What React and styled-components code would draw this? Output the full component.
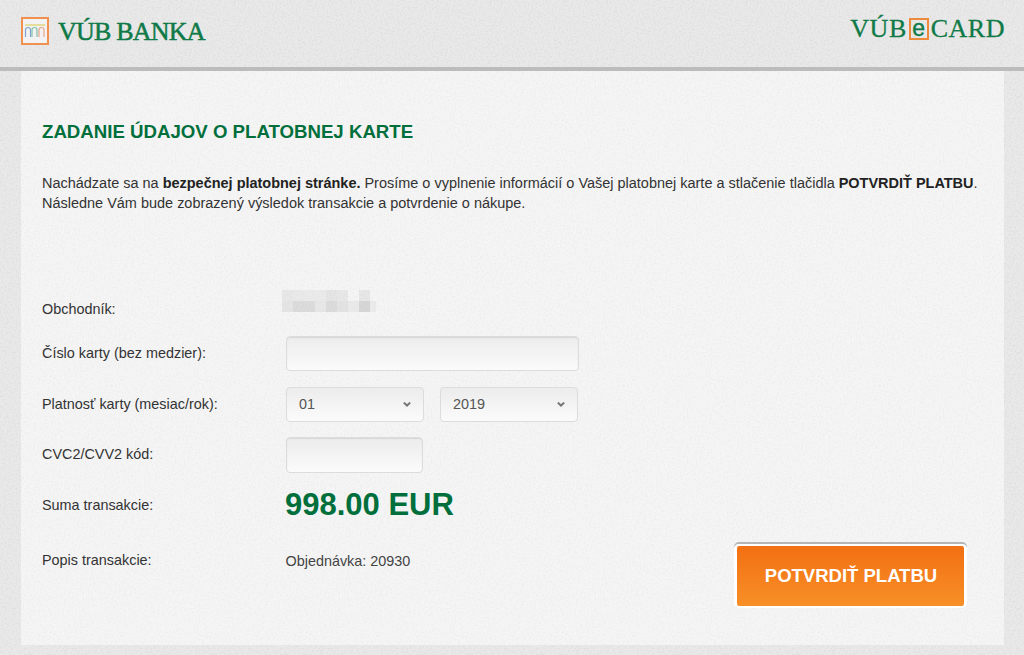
import React from "react";
import styled, { createGlobalStyle } from "styled-components";

const noise = (alpha) =>
  `url("data:image/svg+xml;utf8,<svg xmlns='http://www.w3.org/2000/svg' width='256' height='256'><filter id='n' x='0' y='0' width='100%' height='100%'><feTurbulence type='fractalNoise' baseFrequency='0.55' numOctaves='2' seed='4' stitchTiles='stitch'/><feColorMatrix values='0 0 0 0 0.45 0 0 0 0 0.45 0 0 0 0 0.45 0 0 0 ${alpha} ${-alpha * 0.42}'/></filter><rect width='256' height='256' filter='url(%23n)'/></svg>")`;

const Global = createGlobalStyle`
  html, body { margin: 0; padding: 0; background: #e9e9e9; }
  body { font-family: "Liberation Sans", Arial, sans-serif; color: #333; overflow: hidden; }
`;

const Page = styled.div`
  width: 1024px;
  height: 655px;
  background: #e9e9e9 ${noise(0.5)};
  overflow: hidden;
`;

const Header = styled.header`
  height: 67px;
  border-bottom: 4px solid #bcbcbc;
  display: flex;
  justify-content: space-between;
  padding: 0 19px 0 21px;
`;

const Brand = styled.div`
  display: flex;
  align-items: center;
  height: 62px;
  gap: 9px;
  color: #0f7a47;
  font-family: "Liberation Serif", serif;
  font-size: 26px;
  letter-spacing: -0.8px;
  -webkit-text-stroke: 0.5px #0f7a47;
  white-space: nowrap;
`;

const BrandName = styled.span`
  padding-top: 2px;
`;

const CardBrand = styled.div`
  display: flex;
  align-items: center;
  height: 58px;
  gap: 2px;
  color: #0f7a47;
  font-family: "Liberation Serif", serif;
  font-size: 26px;
  letter-spacing: 0.5px;
  -webkit-text-stroke: 0.3px #0f7a47;
`;

const EBox = styled.span`
  width: 20px;
  height: 22px;
  box-sizing: border-box;
  border: 2px solid #ee8a3c;
  display: flex;
  align-items: center;
  justify-content: center;
  font-family: "Liberation Sans", sans-serif;
  font-size: 23px;
  line-height: 18px;
  letter-spacing: 0;
  padding-bottom: 3px;
  -webkit-text-stroke: 0.4px #0f7a47;
`;

const Panel = styled.main`
  margin: 0 20px 0 21px;
  height: 574px;
  box-sizing: border-box;
  background: #f5f5f5 ${noise(0.3)};
  padding: 50px 20px 0 21px;
  position: relative;
`;

const Title = styled.h1`
  margin: 0;
  color: #006f3c;
  font-size: 18.65px;
  line-height: 22px;
  font-weight: 700;
`;

const Intro = styled.p`
  margin: 30px 0 0;
  font-size: 14.47px;
  line-height: 20px;
  color: #333;
  b { color: #222; }
`;

const Form = styled.div`
  margin-top: 79px;
  display: grid;
  grid-template-columns: 244px 1fr;
  grid-template-rows: 36px 51px 51px 50px 52px 58px;
  align-items: center;
  font-size: 14.4px;
`;

const Label = styled.div`
  color: #333;
  line-height: 18px;
  margin-bottom: 2px;
`;

const Blur = styled.svg`
  display: block;
  margin: 0 0 18px -4px;
`;

const Field = styled.div`
  width: ${(p) => p.$w}px;
  height: ${(p) => p.$h}px;
  box-sizing: border-box;
  border: 1px solid #dcdcdc;
  border-radius: 4px;
  background: linear-gradient(#ececec, #fbfbfb);
  box-shadow: inset 0 1px 1px #d8d8d8;
`;

const Selects = styled.div`
  display: flex;
  gap: 16px;
`;

const Select = styled.div`
  width: ${(p) => p.$w}px;
  height: 35px;
  box-sizing: border-box;
  border: 1px solid #dcdcdc;
  border-radius: 4px;
  background: linear-gradient(#ececec, #fbfbfb);
  display: flex;
  align-items: center;
  justify-content: space-between;
  padding: 0 12px 1px 12px;
  color: #555;
  font-size: 14.4px;
`;

const Amount = styled.div`
  color: #006f3c;
  font-size: 31px;
  font-weight: 700;
  line-height: 34px;
  margin: 0 0 2px -1px;
`;

const Description = styled.div`
  color: #444;
  line-height: 18px;
  margin-left: -0.5px;
`;

const Submit = styled.button`
  position: absolute;
  left: 713px;
  top: 473px;
  width: 233px;
  height: 64px;
  box-sizing: border-box;
  border: 3px solid #fff;
  border-width: 2px 3px;
  border-radius: 5px;
  padding: 0 0 0 1px;
  background: linear-gradient(#f37012, #f78f27);
  box-shadow: 0 -2px 0 #b5b5b5;
  color: #fff;
  font: 700 18.5px "Liberation Sans", sans-serif;
`;

const Chevron = () => (
  <svg width="8" height="5" viewBox="0 0 8 5">
    <path d="M0.8 0.6 L4 3.6 L7.2 0.6" fill="none" stroke="#777" strokeWidth="2" />
  </svg>
);

const LogoMark = () => (
  <svg width="28" height="28" viewBox="0 0 28 28">
    <rect x="1" y="1" width="26" height="26" fill="#f2f2f2" stroke="#f0914f" strokeWidth="2" />
    <rect x="4" y="7" width="20" height="2" fill="#e6dc9c" />
    <path d="M4.5 20V13a2.2 2.2 0 0 1 5 0v7" fill="none" stroke="#7fa3cf" strokeWidth="1.2" />
    <path d="M11 20V13a2.2 2.2 0 0 1 5 0v7" fill="none" stroke="#7fc2b0" strokeWidth="1.2" />
    <path d="M18 20V13a2.2 2.2 0 0 1 5 0v7" fill="none" stroke="#eba58a" strokeWidth="1.2" />
  </svg>
);

const blurCells = [
  [0, 0, 11, 0.1], [11, 0, 11, 0.09], [22, 0, 22, 0.07], [44, 0, 11, 0.12], [55, 0, 11, 0.1], [77, 0, 11, 0.11],
  [0, 11, 11, 0.12], [11, 11, 22, 0.2], [33, 11, 11, 0.1], [44, 11, 11, 0.2], [55, 11, 11, 0.14], [66, 11, 11, 0.08], [77, 11, 11, 0.24], [88, 11, 6, 0.07],
];

export default function App() {
  return (
    <Page>
      <Global />
      <Header>
        <Brand>
          <LogoMark />
          <BrandName>VÚB BANKA</BrandName>
        </Brand>
        <CardBrand>
          <span>VÚB</span>
          <EBox>e</EBox>
          <span>CARD</span>
        </CardBrand>
      </Header>
      <Panel>
        <Title>ZADANIE ÚDAJOV O PLATOBNEJ KARTE</Title>
        <Intro>
          Nachádzate sa na <b>bezpečnej platobnej stránke.</b> Prosíme o vyplnenie informácií o Vašej platobnej karte a stlačenie tlačidla <b>POTVRDIŤ PLATBU</b>.
          <br />
          Následne Vám bude zobrazený výsledok transakcie a potvrdenie o nákupe.
        </Intro>
        <Form>
          <Label>Obchodník:</Label>
          <Blur width="94" height="22" viewBox="0 0 94 22">
            {blurCells.map(([x, y, w, o], i) => (
              <rect key={i} x={x} y={y} width={w} height="11" fill="#777" fillOpacity={o} />
            ))}
          </Blur>
          <Label>Číslo karty (bez medzier):</Label>
          <Field $w={293} $h={35} />
          <Label>Platnosť karty (mesiac/rok):</Label>
          <Selects>
            <Select $w={138}>01<Chevron /></Select>
            <Select $w={138}>2019<Chevron /></Select>
          </Selects>
          <Label>CVC2/CVV2 kód:</Label>
          <Field $w={137} $h={36} />
          <Label>Suma transakcie:</Label>
          <Amount>998.00 EUR</Amount>
          <Label>Popis transakcie:</Label>
          <Description>Objednávka: 20930</Description>
        </Form>
        <Submit>POTVRDIŤ PLATBU</Submit>
      </Panel>
    </Page>
  );
}
